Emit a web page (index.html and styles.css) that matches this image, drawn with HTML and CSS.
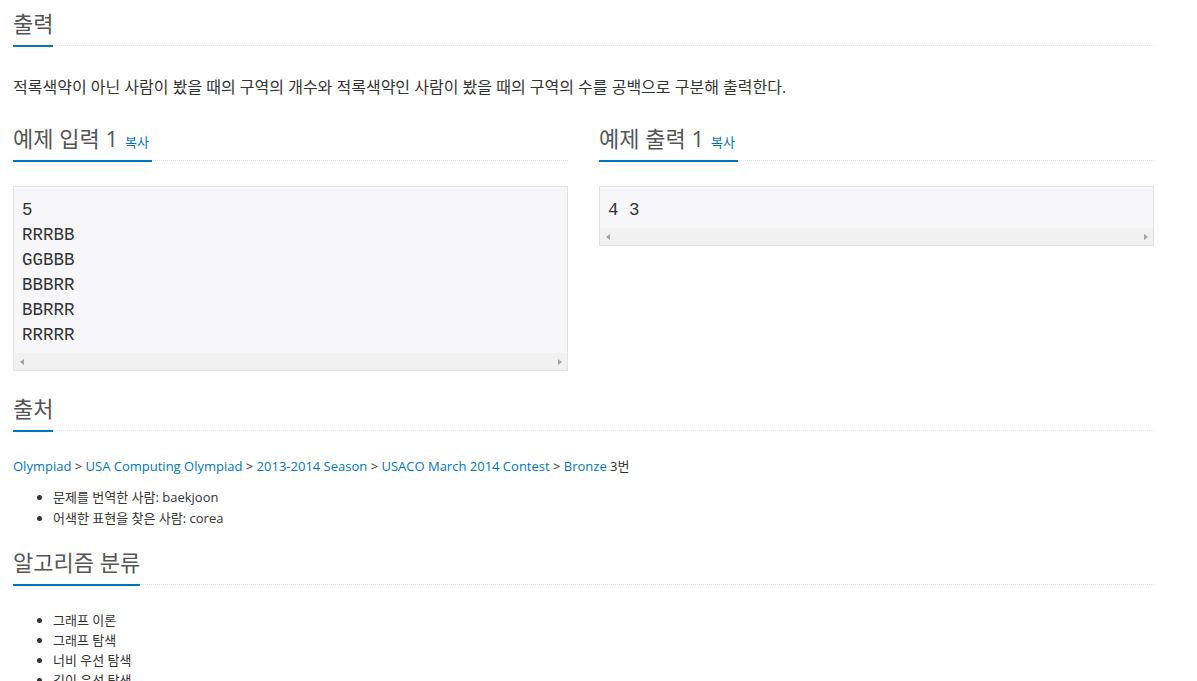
FILE: index.html
```html
<!DOCTYPE html>
<html lang="ko">
<head>
<meta charset="utf-8">
<title>출력</title>
<link rel="stylesheet" href="styles.css">
</head>
<body>
<div class="page">
  <section class="sec">
    <div class="headline"><h2>출력</h2></div>
    <p class="desc">적록색약이 아닌 사람이 봤을 때의 구역의 개수와 적록색약인 사람이 봤을 때의 구역의 수를 공백으로 구분해 출력한다.</p>
  </section>

  <div class="samples">
    <div class="sample-col">
      <div class="headline"><h2>예제 입력 1<button class="copy">복사</button></h2></div>
      <div class="sample">
<pre class="sample-data">5
RRRBB
GGBBB
BBBRR
BBRRR
RRRRR</pre>
        <div class="hscroll"><span class="arrow left"></span><span class="arrow right"></span></div>
      </div>
    </div>
    <div class="sample-col">
      <div class="headline"><h2>예제 출력 1<button class="copy">복사</button></h2></div>
      <div class="sample">
<pre class="sample-data">4 3</pre>
        <div class="hscroll"><span class="arrow left"></span><span class="arrow right"></span></div>
      </div>
    </div>
  </div>

  <section class="sec">
    <div class="headline"><h2>출처</h2></div>
    <p class="source"><a href="#">Olympiad</a> &gt; <a href="#">USA Computing Olympiad</a> &gt; <a href="#">2013-2014 Season</a> &gt; <a href="#">USACO March 2014 Contest</a> &gt; <a href="#">Bronze</a> 3번</p>
    <ul class="credits">
      <li>문제를 번역한 사람: baekjoon</li>
      <li>어색한 표현을 찾은 사람: corea</li>
    </ul>
  </section>

  <section class="sec">
    <div class="headline"><h2>알고리즘 분류</h2></div>
    <ul class="tags">
      <li>그래프 이론</li>
      <li>그래프 탐색</li>
      <li>너비 우선 탐색</li>
      <li>깊이 우선 탐색</li>
    </ul>
  </section>
</div>
</body>
</html>
```

FILE: styles.css
```css
html, body {
  margin: 0;
  padding: 0;
  background: #fff;
}

body {
  font-family: "Open Sans", "Noto Sans CJK KR", sans-serif;
  font-size: 13px;
  line-height: 1.6;
  color: #333;
  overflow: hidden;
}

a {
  color: #0076c0;
  text-decoration: none;
}

.page {
  width: 1141px;
  margin-left: 13px;
  padding-top: 7px;
  display: flow-root;
}

.headline {
  display: flex;
  align-items: flex-start;
  margin: 10px 0 25px 0;
  border-bottom: 1px dotted #dfe3ea;
  height: 38px;
}

.page > .sec:first-child .headline {
  margin-top: 0;
}

.headline h2 {
  display: flex;
  align-items: baseline;
  flex: none;
  margin: 0;
  height: 33px;
  padding-bottom: 5px;
  border-bottom: 2px solid #0076c0;
  font-family: "Open Sans", "Noto Sans CJK KR", sans-serif;
  font-size: 22px;
  font-weight: normal;
  line-height: 33px;
  color: #555;
  white-space: pre;
}

.copy {
  margin: 0 3px 0 7px;
  padding: 0;
  border: 0;
  background: none;
  font-family: "Open Sans", "Noto Sans CJK KR", sans-serif;
  font-size: 13px;
  line-height: 20px;
  color: #0076c0;
  cursor: pointer;
}

.desc {
  margin: 0 0 13px 0;
  padding-top: 4px;
  font-size: 16px;
  line-height: 24px;
  color: #333;
}

.samples {
  display: grid;
  grid-template-columns: 1fr 1fr;
  column-gap: 31px;
  align-items: start;
}

.sample {
  border: 1px solid #e1e1e8;
  background: #f7f7f9;
  margin-bottom: 11px;
}

.sample-data {
  margin: 0;
  padding: 11px 8px 5px 8px;
  font-family: "Liberation Mono", "DejaVu Sans Mono", monospace;
  font-size: 17.5px;
  line-height: 25px;
  color: #333;
  overflow: hidden;
}

.hscroll {
  height: 17px;
  background: #f1f1f1;
  display: flex;
  align-items: center;
  justify-content: space-between;
  padding: 0 5px 0 6px;
}

.arrow {
  width: 0;
  height: 0;
  border-top: 3.5px solid transparent;
  border-bottom: 3.5px solid transparent;
}

.arrow.left {
  border-right: 4px solid #a3a3a3;
}

.arrow.right {
  border-left: 4px solid #a3a3a3;
}

.source {
  margin: 0 0 10px 0;
}

.credits {
  margin: 0 0 18px 0;
  padding-left: 40px;
  font-size: 13px;
  line-height: 20.8px;
}

.tags {
  margin: 0;
  padding-left: 40px;
  font-size: 13px;
  line-height: 20px;
}
```
